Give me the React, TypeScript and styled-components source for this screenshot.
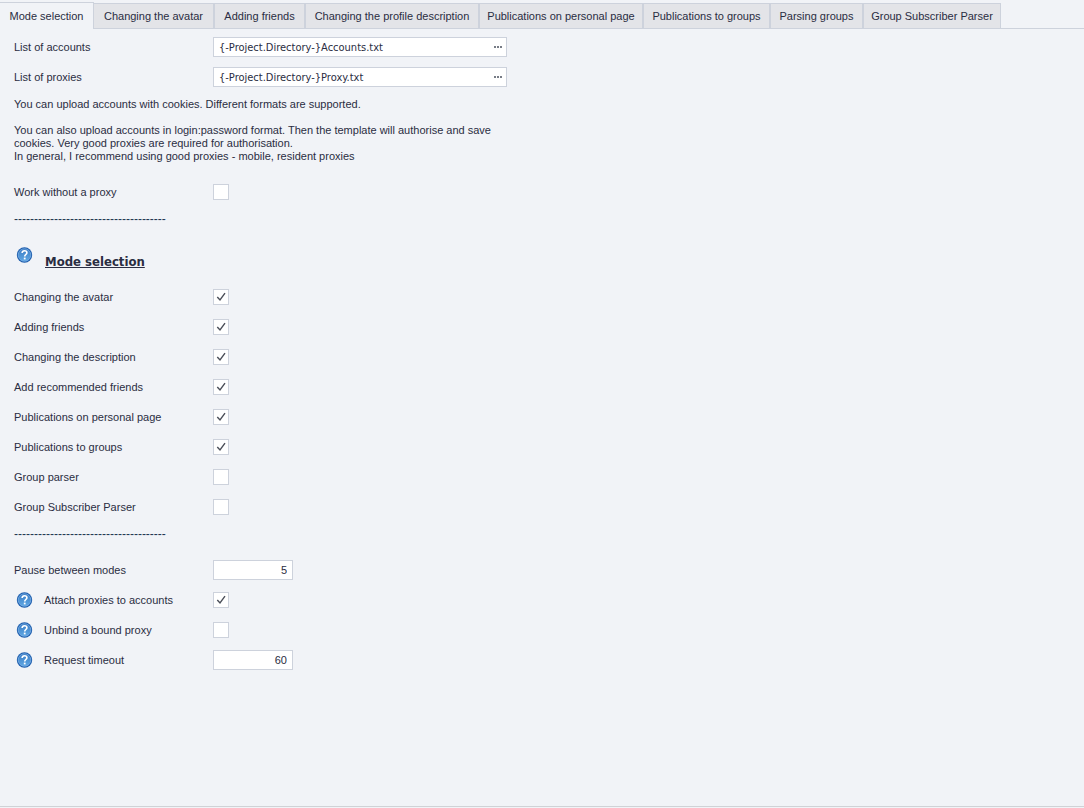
import React, { useState } from "react";
import styled, { createGlobalStyle } from "styled-components";

const GlobalStyle = createGlobalStyle`
  *, *::before, *::after { box-sizing: border-box; }
  body {
    margin: 0;
    background: #f1f3f7;
    color: #2a2d42;
    font-family: Tahoma, "Liberation Sans", sans-serif;
    font-size: 11px;
    line-height: 13px;
  }
  button, input { font: inherit; color: inherit; }
`;

const Page = styled.div`
  min-height: 100vh;
  display: flex;
  flex-direction: column;
  padding: 2px 0 1px;
`;

const TabBar = styled.div`
  display: flex;
  align-items: flex-end;
  height: 27px;
  border-bottom: 1px solid #cdd2dc;
`;

const Tab = styled.button<{ $active: boolean; $width: number }>`
  flex: 0 0 ${(p) => p.$width}px;
  height: ${(p) => (p.$active ? 27 : 25)}px;
  margin: 0 0 ${(p) => (p.$active ? -1 : 0)}px;
  padding: 0;
  white-space: nowrap;
  text-align: center;
  background: ${(p) => (p.$active ? "#f1f3f7" : "#e3e4e8")};
  border: 1px solid #cdd2dc;
  border-bottom: 0;
  border-left-width: ${(p) => (p.$active ? 0 : 1)}px;
  &:nth-child(2) { border-left-width: 0; }
`;

const Panel = styled.main`
  flex: 1;
  padding: 3px 14px 0;
  border-bottom: 1px solid #d0d2d6;
`;

const Row = styled.div`
  display: grid;
  grid-template-columns: 199px 294px;
  align-items: center;
  height: 30px;
`;

const Caption = styled.label`
  display: flex;
  align-items: center;
  gap: 11px;
`;

const FileBox = styled.div`
  display: flex;
  height: 20px;
  background: #fff;
  border: 1px solid #cdd2dc;
`;

const FileInput = styled.input`
  flex: 1;
  min-width: 0;
  padding: 0 5px;
  font-family: Tahoma, "DejaVu Sans Condensed", "DejaVu Sans", sans-serif;
  border: 0;
  background: transparent;
`;

const Browse = styled.button`
  display: flex;
  align-items: center;
  justify-content: center;
  width: 16px;
  padding: 0;
  border: 0;
  background: transparent;
`;

const NumberInput = styled.input`
  width: 80px;
  height: 20px;
  padding: 0 5px;
  text-align: right;
  background: #fff;
  border: 1px solid #cdd2dc;
`;

const CheckWrap = styled.span`
  display: grid;
  width: 16px;
  height: 16px;
  > * { grid-area: 1 / 1; }
  svg { pointer-events: none; visibility: hidden; }
  input:checked + svg { visibility: visible; }
`;

const CheckInput = styled.input`
  appearance: none;
  width: 16px;
  height: 16px;
  margin: 0;
  background: #fff;
  border: 1px solid #cdd2dc;
`;

const Note = styled.p`
  margin: 6px 0 14px;
  white-space: pre-line;
`;

const Rule = styled.div`
  margin: 5px 0 0;
  font-family: "Liberation Sans", sans-serif;
  font-size: 12px;
  line-height: 14px;
  color: #1f3550;
`;

const Heading = styled.div`
  display: flex;
  gap: 12px;
  height: 35px;
  margin: 21px 0 0;
  padding-left: 2px;
  h2 {
    margin: 7px 0 0;
    font: bold 13px/16px Tahoma, "DejaVu Sans Condensed", "DejaVu Sans", sans-serif;
    text-decoration: underline;
  }
`;

const Settings = styled.section`
  margin-top: 14px;
`;

const HelpSlot = styled.span`
  display: flex;
  padding-left: 2px;
`;

const Help = () => (
  <svg width="17" height="17" viewBox="0 0 17 17" aria-hidden="true">
    <defs>
      <linearGradient id="helpFill" x1="0" y1="0" x2="0" y2="1">
        <stop offset="0" stopColor="#3b7cc4" />
        <stop offset="1" stopColor="#5fa8e4" />
      </linearGradient>
    </defs>
    <circle cx="8.5" cy="8" r="7.7" fill="#1f5fae" />
    <circle cx="8.5" cy="8" r="6.3" fill="url(#helpFill)" stroke="#7fb2e6" strokeWidth="0.7" />
    <path d="M6.1 6C6.2 4.400 7.200 3.700 8.500 3.700c1.400 0 2.400.8 2.400 2 0 1.700-2.200 1.900-2.200 3.700" fill="none" stroke="#fff" strokeWidth="1.600" />
    <rect x="7.800" y="10.600" width="1.800" height="1.800" fill="#fff" />
  </svg>
);

const Check = ({ id, checked }: { id: string; checked?: boolean }) => (
  <CheckWrap>
    <CheckInput id={id} type="checkbox" defaultChecked={checked} />
    <svg width="16" height="16" viewBox="0 0 16 16" aria-hidden="true">
      <path d="M4.300 8L7 11L12 4.200" fill="none" stroke="#4a4e58" strokeWidth="1.400" />
    </svg>
  </CheckWrap>
);

const FileField = ({ id, label, value }: { id: string; label: string; value: string }) => (
  <Row>
    <Caption htmlFor={id}>{label}</Caption>
    <FileBox>
      <FileInput id={id} type="text" defaultValue={value} />
      <Browse type="button" aria-label={`Browse: ${label}`}>
        <svg width="8" height="2" viewBox="0 0 8 2" fill="#777c86" aria-hidden="true">
          <rect width="2" height="2" />
          <rect x="3" width="2" height="2" />
          <rect x="6" width="2" height="2" />
        </svg>
      </Browse>
    </FileBox>
  </Row>
);

const tabs: [string, number][] = [
  ["Mode selection", 94],
  ["Changing the avatar", 120],
  ["Adding friends", 91],
  ["Changing the profile description", 174],
  ["Publications on personal page", 164],
  ["Publications to groups", 127],
  ["Parsing groups", 93],
  ["Group Subscriber Parser", 138],
];

const modes: [string, boolean][] = [
  ["Changing the avatar", true],
  ["Adding friends", true],
  ["Changing the description", true],
  ["Add recommended friends", true],
  ["Publications on personal page", true],
  ["Publications to groups", true],
  ["Group parser", false],
  ["Group Subscriber Parser", false],
];

const dashes = "-".repeat(38);

export default function App() {
  const [active, setActive] = useState(0);
  return (
    <Page>
      <GlobalStyle />
      <TabBar role="tablist">
        {tabs.map(([name, width], i) => (
          <Tab
            key={name}
            type="button"
            role="tab"
            aria-selected={i === active}
            $active={i === active}
            $width={width}
            onClick={() => setActive(i)}
          >
            {name}
          </Tab>
        ))}
      </TabBar>
      <Panel>
        <FileField id="accounts" label="List of accounts" value="{-Project.Directory-}Accounts.txt" />
        <FileField id="proxies" label="List of proxies" value="{-Project.Directory-}Proxy.txt" />
        <Note>
          {"You can upload accounts with cookies. Different formats are supported.\n\nYou can also upload accounts in login:password format. Then the template will authorise and save\ncookies. Very good proxies are required for authorisation.\nIn general, I recommend using good proxies - mobile, resident proxies"}
        </Note>
        <Row>
          <Caption htmlFor="noproxy">Work without a proxy</Caption>
          <Check id="noproxy" />
        </Row>
        <Rule>{dashes}</Rule>
        <Heading>
          <Help />
          <h2>Mode selection</h2>
        </Heading>
        <section>
          {modes.map(([name, on], i) => (
            <Row key={name}>
              <Caption htmlFor={`mode${i}`}>{name}</Caption>
              <Check id={`mode${i}`} checked={on} />
            </Row>
          ))}
        </section>
        <Rule>{dashes}</Rule>
        <Settings>
          <Row>
            <Caption htmlFor="pause">Pause between modes</Caption>
            <NumberInput id="pause" type="text" inputMode="numeric" defaultValue="5" />
          </Row>
          <Row>
            <Caption htmlFor="attach"><HelpSlot><Help /></HelpSlot>Attach proxies to accounts</Caption>
            <Check id="attach" checked />
          </Row>
          <Row>
            <Caption htmlFor="unbind"><HelpSlot><Help /></HelpSlot>Unbind a bound proxy</Caption>
            <Check id="unbind" />
          </Row>
          <Row>
            <Caption htmlFor="timeout"><HelpSlot><Help /></HelpSlot>Request timeout</Caption>
            <NumberInput id="timeout" type="text" inputMode="numeric" defaultValue="60" />
          </Row>
        </Settings>
      </Panel>
    </Page>
  );
}
